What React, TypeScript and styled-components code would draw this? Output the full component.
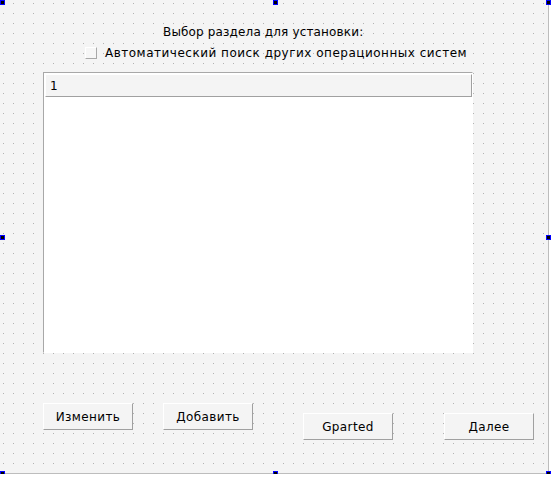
import React from 'react';
import styled, { createGlobalStyle } from 'styled-components';

const GlobalStyle = createGlobalStyle`
    html, body {
        margin: 0;
        padding: 0;
        background: #ffffff;
    }
    body {
        font-family: 'DejaVu Sans', 'Liberation Sans', sans-serif;
        font-size: 12px;
        color: #000000;
    }
`;

const FORM_BG = '#f4f4f4';
const DOT = '#b2b2b2';

const StyledForm = styled.div`
    position: relative;
    box-sizing: content-box;
    width: 548px;
    height: 473px;
    border-right: 1px solid #bdbdbd;
    border-bottom: 1px solid #bdbdbd;
    display: flex;
    flex-direction: column;
    background-color: ${FORM_BG};
    background-image: linear-gradient(
            to bottom,
            ${FORM_BG} 0 3px,
            transparent 3px 4px,
            ${FORM_BG} 4px 10px
        ),
        linear-gradient(to right, ${FORM_BG} 0 3px, ${DOT} 3px 4px, ${FORM_BG} 4px 10px);
    background-size: 10px 10px;
`;
const StyledHandle = styled.div<{ $x: number; $y: number }>`
    position: absolute;
    left: ${(p) => p.$x}px;
    top: ${(p) => p.$y}px;
    width: 5px;
    height: 5px;
    box-sizing: border-box;
    border: 1px solid #0000ff;
    background: #000000;
`;
const StyledTitle = styled.div`
    margin: 25px 0 0 163px;
    line-height: 14px;
    letter-spacing: 0.15px;
    white-space: nowrap;
`;
const StyledCheckRow = styled.label`
    display: flex;
    align-items: center;
    gap: 8px;
    margin: 7px 0 0 85px;
    line-height: 14px;
    letter-spacing: 0.5px;
    white-space: nowrap;
`;
const StyledCheckBox = styled.span`
    width: 12px;
    height: 12px;
    box-sizing: border-box;
    border-top: 1px solid #ffffff;
    border-left: 1px solid #ffffff;
    border-right: 1px solid #a8a8a8;
    border-bottom: 1px solid #a8a8a8;
    background: #f6f6f6;
`;
const StyledList = styled.div`
    margin: 12px 0 0 43px;
    width: 430px;
    height: 281px;
    box-sizing: border-box;
    border-top: 1px solid #a8a8a8;
    border-left: 1px solid #a8a8a8;
    border-right: 1px solid #ffffff;
    border-bottom: 1px solid #ffffff;
    background: #ffffff;
    display: flex;
    flex-direction: column;
    padding: 1px 0 0 1px;
`;
const StyledHeader = styled.div`
    height: 23px;
    box-sizing: border-box;
    border-top: 1px solid #ffffff;
    border-left: 1px solid #ffffff;
    border-right: 1px solid #a0a0a0;
    border-bottom: 1px solid #a0a0a0;
    background: ${FORM_BG};
    display: flex;
    align-items: center;
    padding-left: 4px;
    line-height: 14px;
`;
const StyledButtonRow = styled.div`
    display: flex;
    align-items: flex-start;
    margin: 50px 0 0 43px;
    gap: 50px;
`;
const StyledButtonGroup = styled.div<{ $gap: number }>`
    display: flex;
    align-items: flex-start;
    gap: ${(p) => p.$gap}px;
`;
const StyledButton = styled.button<{ $drop?: number }>`
    margin-top: ${(p) => p.$drop ?? 0}px;
    width: 90px;
    height: 27px;
    box-sizing: border-box;
    padding: 0;
    font: inherit;
    letter-spacing: 0.4px;
    color: #000000;
    background: ${FORM_BG};
    border-top: 1px solid #ffffff;
    border-left: 1px solid #ffffff;
    border-right: 1px solid #a0a0a0;
    border-bottom: 1px solid #a0a0a0;
    border-radius: 0;
`;

const handles: [number, number][] = [
    [0, 0],
    [273, 0],
    [546, 0],
    [0, 235],
    [546, 235],
    [0, 471],
    [273, 471],
    [546, 471],
];

export default function App() {
    return (
        <>
            <GlobalStyle />
            <StyledForm>
                <StyledTitle>Выбор раздела для установки:</StyledTitle>
                <StyledCheckRow>
                    <StyledCheckBox />
                    Автоматический поиск других операционных систем
                </StyledCheckRow>
                <StyledList>
                    <StyledHeader>1</StyledHeader>
                </StyledList>
                <StyledButtonRow>
                    <StyledButtonGroup $gap={30}>
                        <StyledButton>Изменить</StyledButton>
                        <StyledButton>Добавить</StyledButton>
                    </StyledButtonGroup>
                    <StyledButtonGroup $gap={51}>
                        <StyledButton $drop={10}>Gparted</StyledButton>
                        <StyledButton $drop={10}>Далее</StyledButton>
                    </StyledButtonGroup>
                </StyledButtonRow>
                {handles.map(([x, y]) => (
                    <StyledHandle key={`${x}-${y}`} $x={x} $y={y} />
                ))}
            </StyledForm>
        </>
    );
}
